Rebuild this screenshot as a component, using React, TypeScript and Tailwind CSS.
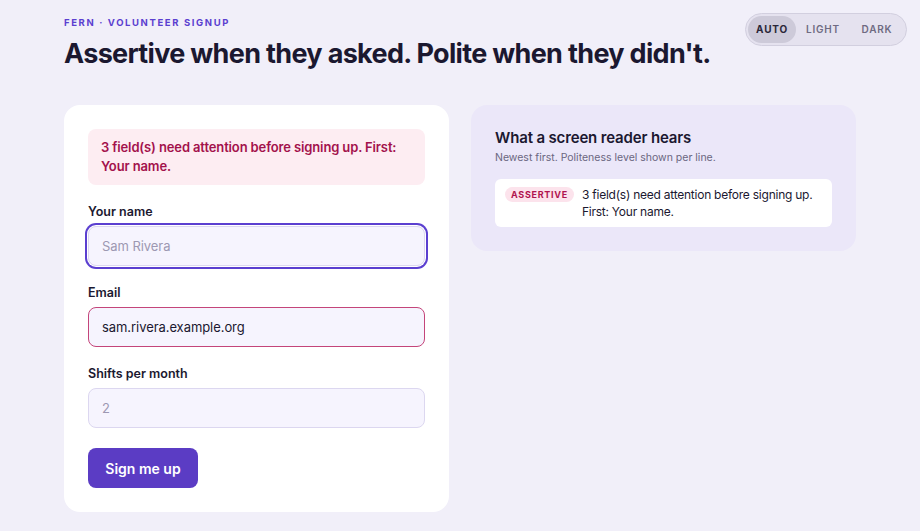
import React from 'react';

const fieldBase =
  'w-full h-10 rounded-lg border bg-[#f6f4fe] px-[13px] text-[13px] tracking-[-0.005em] text-[#1b1830] outline-none placeholder:text-[#9d98b2]';

const App: React.FC = () => {
  return (
    <div
      className="relative min-h-[531px] bg-[#f1eff9] text-[#1b1830]"
      style={{ fontFamily: 'Inter, "Noto Sans", sans-serif' }}
    >
      {/* theme toggle */}
      <div className="absolute top-[13px] right-[13px] flex items-center rounded-full border-[1.5px] border-[#d2cfdf] bg-[#e5e2ef] p-[2px]">
        <button className="h-[27px] w-[48px] rounded-full bg-[#cdcad9] text-[10px] font-bold tracking-[0.08em] text-[#2a2738]">
          AUTO
        </button>
        <button className="h-[27px] w-[54px] rounded-full text-[10px] font-semibold tracking-[0.08em] text-[#6f6b82]">
          LIGHT
        </button>
        <button className="h-[27px] w-[54px] rounded-full text-[10px] font-semibold tracking-[0.08em] text-[#6f6b82]">
          DARK
        </button>
      </div>

      <main className="px-16 pt-[17px]">
        <p className="text-[9.5px] leading-[12px] font-bold tracking-[0.17em] text-[#5b3fd0]">
          FERN · VOLUNTEER SIGNUP
        </p>
        <h1 className="mt-[8px] text-[27px] leading-[34px] font-bold tracking-[-0.025em] text-[#1b1830]">
          Assertive when they asked. Polite when they didn't.
        </h1>

        <div className="mt-[34px] grid grid-cols-2 gap-[22px] items-start">
          {/* form card */}
          <form className="rounded-2xl bg-white p-6" onSubmit={(e) => e.preventDefault()}>
            <div className="rounded-lg bg-[#fdedf2] px-[13px] py-[9px] text-[13px] leading-[19px] font-semibold tracking-[-0.01em] text-[#a3124c]">
              3 field(s) need attention before signing up. First: Your name.
            </div>

            <label className="mt-[18px] block text-[12.5px] leading-[18px] font-semibold">Your name</label>
            <input
              className={`${fieldBase} mt-[5px] border-[#dcd7f0] ring-2 ring-[#5b3fd0] ring-offset-1`}
              placeholder="Sam Rivera"
            />

            <label className="mt-[18px] block text-[12.5px] leading-[18px] font-semibold">Email</label>
            <input
              className={`${fieldBase} mt-[5px] border-[#c4457a]`}
              defaultValue="sam.rivera.example.org"
            />

            <label className="mt-[18px] block text-[12.5px] leading-[18px] font-semibold">Shifts per month</label>
            <input className={`${fieldBase} mt-[5px] border-[#dcd7f0]`} placeholder="2" />

            <button
              type="submit"
              className="mt-5 h-10 w-[110px] rounded-lg bg-[#5b3cc4] text-[14px] font-semibold text-white"
            >
              Sign me up
            </button>
          </form>

          {/* announcer log */}
          <section className="rounded-2xl bg-[#ebe7f9] px-6 pt-[23px] pb-6">
            <h2 className="text-[15px] leading-[20px] font-semibold tracking-[-0.01em]">What a screen reader hears</h2>
            <p className="mt-[2px] text-[10.5px] leading-[16px] text-[#6a6680]">
              Newest first. Politeness level shown per line.
            </p>
            <ul className="mt-[13px]">
              <li className="flex items-start gap-2 rounded-md bg-white px-[10px] py-[7px]">
                <span className="mt-[1px] shrink-0 rounded-full bg-[#fce3ec] px-[6px] text-[9px] leading-[15px] font-bold tracking-[0.08em] text-[#b0134f]">
                  ASSERTIVE
                </span>
                <span className="text-[12px] leading-[17px] tracking-[-0.02em] text-[#1b1830]">
                  3 field(s) need attention before signing up. First: Your name.
                </span>
              </li>
            </ul>
          </section>
        </div>
      </main>
    </div>
  );
};

export default App;
